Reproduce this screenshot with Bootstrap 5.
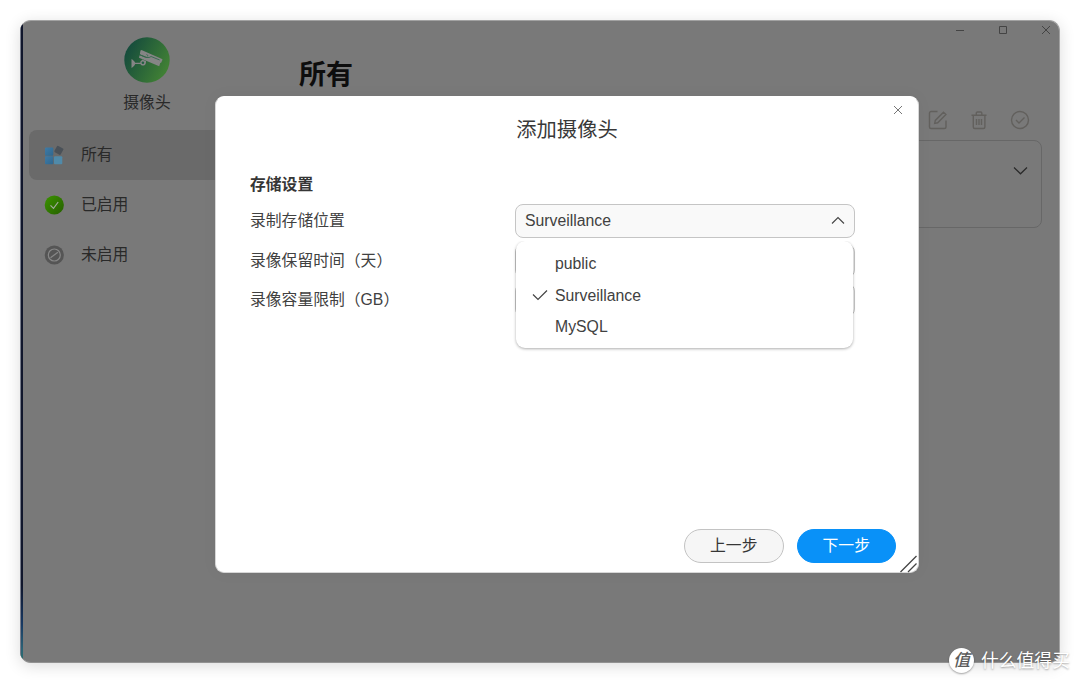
<!DOCTYPE html>
<html lang="zh-CN">
<head>
<meta charset="utf-8">
<meta name="viewport" content="width=device-width, initial-scale=1">
<title>摄像头</title>
<link href="https://cdn.jsdelivr.net/npm/bootstrap@5.3.0/dist/css/bootstrap.min.css" rel="stylesheet">
<style>
body{width:1080px;height:683px;overflow:hidden;background:#fff;color:#414141;font:15.8px/24px "Liberation Sans","Noto Sans CJK SC",sans-serif}
svg{display:block;fill:none;flex:none}
.app-window{width:1040px;height:643px;margin:20px 0 0 20px;border-radius:11px;background:#797979;border-top:1px solid #a2a2a2;border-bottom:1px solid #929292;border-right:1px solid #a2a2a2;box-shadow:0 3px 16px rgba(0,0,0,.14);color:#292929}
.edge-strip{width:3px;background:linear-gradient(#10162c 0 88%,#173862 94%,#2c6275 98%,#28716f);border-left:1px solid #777c8a}
.side-nav{width:192px;padding:16px 0 0 6px}
.app-title{padding-left:50px}
.app-name{margin-top:8px}
.side-list{margin-top:15px}
.side-item{height:50px;padding-left:15px;border-radius:8px;gap:17px}
.side-item.active{background:#6a6a6a;width:240px}
.main-pane{padding:0 17px 0 84px}
.win-buttons{height:18px;margin-right:-9px;gap:33px}
.page-title{font-size:27px;line-height:40px;font-weight:700;color:#0d0d0d;margin:16px 0 0 0}
.toolbar{margin-top:15px;height:20px;gap:21px;padding-right:12px}
.camera-card{height:88px;margin-top:10px;border:1px solid #676767;border-radius:8px;padding:25px 13px}
.dialog-box{left:215px;top:96px;width:704px;height:477px;border-radius:9px;background:#fff;border:1px solid #d7d7d7;border-top-color:#fff;box-shadow:0 0 16px rgba(0,0,0,.045);padding:0 63px 0 34px}
.dialog-title{font-size:20.3px;line-height:30px;margin:18px -63px 0 -34px;font-weight:400;color:#383838}
.section-title{font-size:15.8px;line-height:24px;margin:28px 0 0;color:#363636}
.field-list{padding-top:3px}
.field-row{height:39.6px}
.field-row.first{height:41px}
.select-box{width:340px;height:34px;border:1px solid #c5c5c5;border-radius:8px;background:#f9f9f9;padding:0 9px}
.options{left:300px;top:144px;width:337px;height:107px;border-radius:9px;background:#fff;box-shadow:0 1px 3px rgba(0,0,0,.32);padding:7px 0;clip-path:inset(0 -5px -5px -5px)}
.option-item{height:31.7px;padding-left:16px;gap:7px}
.tick-slot{width:16px}
.dialog-actions{right:22px;bottom:9px;gap:13px}
.pill{width:99.5px;height:34px;padding:0;border-radius:18px;font-size:15.8px;line-height:32px}
.pill-back{background:#f6f6f6;border:1px solid #c3c3c3;color:#363636}
.pill-next{background:#0991f8;border:1px solid #0991f8;color:#fff}
.corner-grip{right:-1px;bottom:-1px}
.brand-mark{left:949px;top:648px;gap:7px;color:#fff;font-size:17.8px;text-shadow:0 1px 2px rgba(0,0,0,.35)}
.brand-dot{width:25px;height:25px;border-radius:50%;background:#fff;color:#5c5c5c;font-size:17px;font-weight:500;font-style:italic;text-shadow:none;box-shadow:0 1px 2px rgba(0,0,0,.35)}
</style>
</head>
<body class="position-relative">
<main class="app-window d-flex overflow-hidden">
  <div class="edge-strip"></div>
  <aside class="side-nav flex-shrink-0">
    <div class="text-center app-title">
      <svg class="mx-auto" width="46" height="46" viewBox="0 0 46 46">
        <defs><linearGradient id="camFill" x1="0" y1=".2" x2="1" y2=".7"><stop stop-color="#12483d"/><stop offset="1" stop-color="#438334"/></linearGradient></defs>
        <circle cx="23" cy="23" r="22.7" fill="url(#camFill)"/>
        <g fill="#858585"><path d="m17.500 10 20.500 9c.5.2.6.7.400 1.100L37 23 15.800 14.200l.7-3.700Z" transform="translate(0 3)"/><path d="m15.600 18.200 5.200 2 3 .8 3-.4 8.600 3.400 1.200.7-1.400 4.600L15 20.800Z"/><path d="M7.500 22c1 0 3 2.500 3.700 3.700h5.100c-.2-1.100.6-1.800 1.500-2.400l.2-.9 4 1.500c.2 2.300-.7 4.900-3.200 4.700-1.300 0-2.100-.7-2.400-1.500h-5.200C10.600 28.500 9 30.500 7.500 31Z"/></g>
        <path d="m15.800 17.800 6 2.500 3.300.2 2-1 8.600 3.500M22.500 17.500c1 .2 1.500 1 1.200 1.800" stroke="#32694d" stroke-width=".9"/>
        <circle cx="18.900" cy="25.700" r="1.300" fill="#246144"/>
      </svg>
      <div class="app-name">摄像头</div>
    </div>
    <nav class="side-list">
      <div class="side-item active d-flex align-items-center">
        <svg width="20" height="20" viewBox="0 0 20 20"><defs><linearGradient id="tileFill" x2="1" y2="1"><stop stop-color="#3f7ba6"/><stop offset="1" stop-color="#2f678f"/></linearGradient></defs><rect x="1" y="2.500" width="8.300" height="8.300" rx="1" fill="url(#tileFill)"/><rect x="1" y="11.200" width="8.300" height="8" rx="1" fill="url(#tileFill)"/><rect x="10" y="11.200" width="8.300" height="8" rx="1" fill="#508aa9"/><rect x="11.300" y="1.700" width="7.200" height="7.200" rx="1" transform="rotate(29 14.900 5.300)" fill="#4a5158"/></svg>
        <span>所有</span>
      </div>
      <div class="side-item d-flex align-items-center">
        <svg width="20" height="20" viewBox="0 0 20 20"><defs><linearGradient id="okFill" x2="1" y2="1"><stop stop-color="#3b9300"/><stop offset="1" stop-color="#265f00"/></linearGradient></defs><circle cx="10.300" cy="10" r="9.600" fill="url(#okFill)"/><path d="m6.500 10.300 3 3 4.700-6.300" stroke="#a2aa9d" stroke-width="1.200"/></svg>
        <span>已启用</span>
      </div>
      <div class="side-item d-flex align-items-center">
        <svg width="20" height="20" viewBox="0 0 20 20"><circle cx="10.300" cy="10" r="9.600" fill="#555"/><circle cx="10.300" cy="10" r="6" stroke="#888" stroke-width="1.200"/><path d="m6.500 12.800 7.400-5.600" stroke="#888" stroke-width="1.200"/></svg>
        <span>未启用</span>
      </div>
    </nav>
  </aside>
  <section class="main-pane flex-grow-1">
    <div class="win-buttons d-flex justify-content-end align-items-center">
      <svg width="10" height="10"><path d="M1 5.500h8" stroke="#444"/></svg>
      <svg width="10" height="10"><path d="M1.500 1.500h7v7h-7Z" stroke="#444"/></svg>
      <svg width="10" height="10"><path d="m1 1 8 8m0-8L1 9" stroke="#444"/></svg>
    </div>
    <h1 class="page-title">所有</h1>
    <div class="toolbar d-flex justify-content-end">
      <svg width="20" height="20" viewBox="0 0 20 20" stroke="#62605d" stroke-width="1.400"><path d="M9.500 1.500H3a1.500 1.500 0 0 0-1.500 1.500v14A1.500 1.500 0 0 0 3 18.500h13.500A1.500 1.500 0 0 0 18 17v-6.500M15.500 2.200l2.400 2.400-8.200 8.200-3 .6.600-3Z"/></svg>
      <svg width="20" height="20" viewBox="0 0 20 20" stroke="#62605d" stroke-width="1.400"><path d="M2.500 5.300h15M4.300 5.500V17c0 .8.600 1.500 1.500 1.500h8.600c.8 0 1.500-.7 1.500-1.500V5.500M7.300 5V3c0-.7.500-1 1-1h3.500c.6 0 1 .3 1 1v2M7.500 9v6M10 9v6M12.500 9v6"/></svg>
      <svg width="20" height="20" viewBox="0 0 20 20" stroke="#62605d" stroke-width="1.400"><circle cx="10" cy="10" r="8.500"/><path d="m6 10 3 3 5.500-5.500"/></svg>
    </div>
    <div class="camera-card d-flex justify-content-end"><svg width="15" height="10"><path d="m1 1.500 6.500 6.300L14 1.500" stroke="#292929" stroke-width="1.200"/></svg></div>
  </section>
</main>

<div class="dialog-box position-absolute" role="dialog">
  <svg class="position-absolute" style="right:15px;top:8px" width="10" height="10"><path d="m1 1 8 8m0-8L1 9" stroke="#777"/></svg>
  <h2 class="dialog-title text-center">添加摄像头</h2>
  <h3 class="section-title fw-bold">存储设置</h3>
  <div class="field-list">
    <div class="field-row first d-flex justify-content-between align-items-center"><span>录制存储位置</span><div class="select-box d-flex align-items-center justify-content-between"><span>Surveillance</span><svg width="14" height="9"><path d="m1 7.500 6-6 6 6" stroke="#444" stroke-width="1.100"/></svg></div></div>
    <div class="field-row d-flex justify-content-between align-items-center"><span>录像保留时间（天）</span><div class="select-box"></div></div>
    <div class="field-row d-flex justify-content-between align-items-center"><span>录像容量限制（GB）</span><div class="select-box"></div></div>
  </div>
  <div class="options position-absolute">
    <div class="option-item d-flex align-items-center"><span class="tick-slot"></span><span>public</span></div>
    <div class="option-item d-flex align-items-center"><svg class="tick-slot" width="16" height="12"><path d="m1 4.500 5 5 9-9" stroke="#444" stroke-width="1.200"/></svg><span>Surveillance</span></div>
    <div class="option-item d-flex align-items-center"><span class="tick-slot"></span><span>MySQL</span></div>
  </div>
  <div class="dialog-actions position-absolute d-flex"><button class="btn pill pill-back">上一步</button><button class="btn pill pill-next">下一步</button></div>
  <svg class="corner-grip position-absolute" width="20" height="18"><path d="M1.500 17 17.500 1M9 17l8.500-8.500" stroke="#444" stroke-width="1.300"/></svg>
</div>
<div class="brand-mark position-absolute d-flex align-items-center text-nowrap"><span class="brand-dot d-flex align-items-center justify-content-center">值</span><span>什么值得买</span></div>
<script src="https://cdn.jsdelivr.net/npm/bootstrap@5.3.0/dist/js/bootstrap.bundle.min.js"></script>
</body>
</html>
